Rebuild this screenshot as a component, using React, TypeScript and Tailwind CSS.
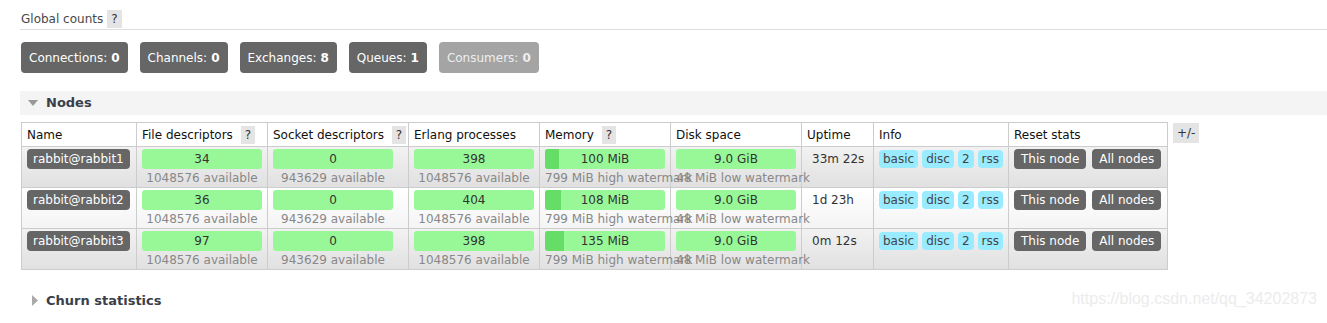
import React from "react";

const font = { fontFamily: '"DejaVu Sans", Verdana, sans-serif' };

type Node = {
    name: string;
    fd: string;
    sock: string;
    proc: string;
    mem: string;
    memPct: number;
    uptime: string;
};

const nodes: Node[] = [
    { name: "rabbit@rabbit1", fd: "34", sock: "0", proc: "398", mem: "100 MiB", memPct: 12, uptime: "33m 22s" },
    { name: "rabbit@rabbit2", fd: "36", sock: "0", proc: "404", mem: "108 MiB", memPct: 13, uptime: "1d 23h" },
    { name: "rabbit@rabbit3", fd: "97", sock: "0", proc: "398", mem: "135 MiB", memPct: 16, uptime: "0m 12s" },
];

function Help() {
    return <span className="inline-block bg-[#e4e4e4] px-[4px] ml-[4px] leading-[18px] text-[#333]">?</span>;
}

function Count({ label, value, dim }: { label: string; value: string; dim?: boolean }) {
    return (
        <div className={(dim ? "bg-[#a4a4a4] text-[#eee]" : "bg-[#666] text-white") + " rounded-[4px] h-[31px] px-[8px] flex items-center text-[12px]"}>
            {label}: <b className="ml-[4px]">{value}</b>
        </div>
    );
}

function Bar({ value, sub, fill }: { value: string; sub: string; fill?: number }) {
    return (
        <div className="w-[120px]">
            <div className="relative h-[20px] bg-[#98f898] rounded-[3px] overflow-hidden flex items-center justify-center text-[#333]">
                {fill !== undefined && (
                    <div className="absolute left-0 top-0 bottom-0 bg-[#66dd66]" style={{ width: `${fill}%` }} />
                )}
                <span className="relative">{value}</span>
            </div>
            <div className="text-center whitespace-nowrap text-[#888] leading-[16px] mt-[1px]">{sub}</div>
        </div>
    );
}

function Tag({ children }: { children: React.ReactNode }) {
    return <span className="bg-[#99ebff] text-[#444] rounded-[4px] px-[4px] leading-[18px] inline-block">{children}</span>;
}

function Btn({ children }: { children: React.ReactNode }) {
    return <span className="bg-[#666] text-white rounded-[4px] px-[7px] leading-[20px] inline-block">{children}</span>;
}

const th = "border border-[#ccc] px-[5px] text-left font-normal whitespace-nowrap overflow-hidden";
const td = "border border-[#ccc] px-[5px] pt-[2px] align-top";

export default function App() {
    return (
        <div className="w-[1327px] h-[323px] bg-white overflow-hidden text-[12px] text-[#484848] relative" style={font}>
            <div className="pl-[21px] pt-[10px]">
                <div className="flex items-center h-[18px] text-[#484848]">
                    Global counts <Help />
                </div>
            </div>
            <div className="ml-[20px] border-t border-[#ddd] mt-[1px]" />
            <div className="flex gap-[12px] pl-[21px] mt-[12px]">
                <Count label="Connections" value="0" />
                <Count label="Channels" value="0" />
                <Count label="Exchanges" value="8" />
                <Count label="Queues" value="1" />
                <Count label="Consumers" value="0" dim />
            </div>

            <div className="ml-[20px] mt-[18px] h-[24px] bg-[#f4f4f4] flex items-center">
                <svg width="10" height="7" viewBox="0 0 10 7" className="ml-[8px] mr-[8px]">
                    <polygon points="0,0 10,0 5,6" fill="#999" />
                </svg>
                <b className="text-[13px] text-[#3a3f4a]">Nodes</b>
            </div>

            <div className="flex items-start ml-[21px] mt-[7px]">
                <table className="border-collapse table-fixed w-[1146px] text-[12px]">
                    <colgroup>
                        <col className="w-[115px]" />
                        <col className="w-[131px]" />
                        <col className="w-[141px]" />
                        <col className="w-[131px]" />
                        <col className="w-[131px]" />
                        <col className="w-[131px]" />
                        <col className="w-[72px]" />
                        <col className="w-[135px]" />
                        <col className="w-[159px]" />
                    </colgroup>
                    <thead>
                        <tr className="h-[24px] bg-white text-[#111]">
                            <th className={th}>Name</th>
                            <th className={th}>File descriptors <Help /></th>
                            <th className={th}>Socket descriptors <Help /></th>
                            <th className={th}>Erlang processes</th>
                            <th className={th}>Memory <Help /></th>
                            <th className={th}>Disk space</th>
                            <th className={th}>Uptime</th>
                            <th className={th}>Info</th>
                            <th className={th}>Reset stats</th>
                        </tr>
                    </thead>
                    <tbody>
                        {nodes.map((n, i) => (
                            <tr
                                key={n.name}
                                className={(i % 2 === 0 ? "bg-gradient-to-b from-[#f2f2f2] to-[#e0e0e0]" : "bg-gradient-to-b from-white to-[#f4f4f4]") + " h-[41px]"}
                            >
                                <td className={td}>
                                    <span className="bg-[#666] text-white rounded-[4px] px-[6px] leading-[20px] inline-block">{n.name}</span>
                                </td>
                                <td className={td}>
                                    <Bar value={n.fd} sub="1048576 available" />
                                </td>
                                <td className={td}>
                                    <Bar value={n.sock} sub="943629 available" />
                                </td>
                                <td className={td}>
                                    <Bar value={n.proc} sub="1048576 available" />
                                </td>
                                <td className={td}>
                                    <Bar value={n.mem} sub="799 MiB high watermark" fill={n.memPct} />
                                </td>
                                <td className={td}>
                                    <Bar value="9.0 GiB" sub="48 MiB low watermark" />
                                </td>
                                <td className="border border-[#ccc] pl-[10px] pt-[2px] align-top leading-[20px] text-[#333]">{n.uptime}</td>
                                <td className="border border-[#ccc] px-[5px] pt-[3px] align-top">
                                    <div className="flex gap-[4px]">
                                        <Tag>basic</Tag>
                                        <Tag>disc</Tag>
                                        <Tag>2</Tag>
                                        <Tag>rss</Tag>
                                    </div>
                                </td>
                                <td className={td}>
                                    <div className="flex gap-[6px]">
                                        <Btn>This node</Btn>
                                        <Btn>All nodes</Btn>
                                    </div>
                                </td>
                            </tr>
                        ))}
                    </tbody>
                </table>
                <span className="ml-[5px] mt-[1px] bg-[#e4e4e4] px-[4px] leading-[20px] text-[#333]">+/-</span>
            </div>

            <div className="flex items-center ml-[32px] mt-[21px]">
                <svg width="6" height="11" viewBox="0 0 6 11" className="mr-[8px]">
                    <polygon points="0,0 6,5.5 0,11" fill="#aaa" />
                </svg>
                <b className="text-[13px] text-[#3a3f4a]">Churn statistics</b>
            </div>

            <div className="absolute right-[10px] bottom-[12px] text-[16px] text-[#ececec]" style={{ fontFamily: '"Liberation Sans", Arial, sans-serif' }}>
                https://blog.csdn.net/qq_34202873
            </div>
        </div>
    );
}
